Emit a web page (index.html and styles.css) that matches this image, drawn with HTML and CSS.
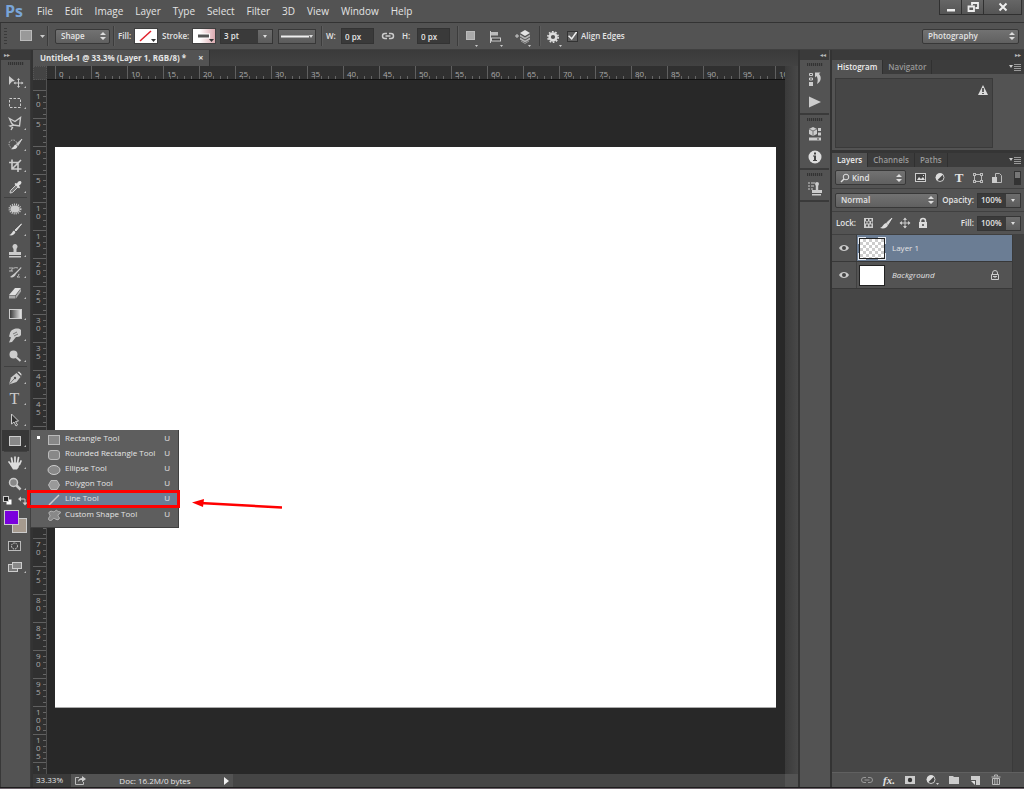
FILE: index.html
```html
<!DOCTYPE html>
<html lang="en">
<head>
<meta charset="utf-8">
<title>Untitled-1 @ 33.3% (Layer 1, RGB/8)</title>
<link rel="stylesheet" href="styles.css">
</head>
<body>
<div class="app">
  <header class="menubar">
    <span class="logo">Ps</span>
    <nav class="menus">
      <button>File</button><button>Edit</button><button>Image</button><button>Layer</button><button>Type</button><button>Select</button><button>Filter</button><button>3D</button><button>View</button><button>Window</button><button>Help</button>
    </nav>
    <div class="window-buttons">
      <button aria-label="Minimize"><svg width="16" height="12"><path d="M4 8h8v2.500h-8z" fill="#eee"/></svg></button>
      <button aria-label="Restore"><svg width="16" height="12"><g fill="none" stroke="#eee" stroke-width="1.800"><path d="M7 4.500V2h6v5h-2.500"/><path d="M3.500 5.500h5.500v4.500h-5.500z"/></g></svg></button>
      <button class="close" aria-label="Close"><svg width="16" height="12"><path d="M4.500 2.500l7 7M11.500 2.500l-7 7" stroke="#eee" stroke-width="2"/></svg></button>
    </div>
  </header>

  <div class="options">
    <span class="grip-v"></span>
    <button class="preset" aria-label="Tool preset"><svg width="28" height="14"><rect x="1.500" y="1.500" width="11" height="10" fill="#999" stroke="#bbb"/><path d="M21 6h5l-2.500 3z" fill="#ccc"/></svg></button>
    <span class="divider"></span>
    <select class="select mode" aria-label="Mode"><option>Shape</option></select>
    <span class="divider"></span>
    <span class="label fill-label">Fill:</span>
    <button class="swatch" aria-label="Fill"><svg width="22" height="14"><rect width="22" height="14" fill="#fff"/><path d="M5 12L16 2" stroke="#e0202a" stroke-width="1.500"/><path d="M16 10h5l-2.500 3z" fill="#333"/></svg></button>
    <span class="label stroke-label">Stroke:</span>
    <button class="swatch" aria-label="Stroke"><svg width="22" height="14"><defs><linearGradient id="pink"><stop offset="0.300" stop-color="#fff"/><stop offset="1" stop-color="#dcaab0"/></linearGradient></defs><rect width="22" height="14" fill="url(#pink)"/><rect x="4.500" y="5" width="12" height="4" fill="#555" stroke="#fff"/><path d="M16 10h5l-2.500 3z" fill="#333"/></svg></button>
    <span class="combo stroke-width"><input value="3 pt" aria-label="Stroke width"><button aria-label="Stroke width list"></button></span>
    <button class="line-type" aria-label="Stroke type"><svg width="36" height="13"><path d="M2 6.500h28" stroke="#eee" stroke-width="2"/><path d="M30 5h4l-2 3z" fill="#ddd"/></svg></button>
    <span class="divider"></span>
    <label class="label" for="w">W:</label><input id="w" class="field w-field" value="0 px">
    <button class="link" aria-label="Link width and height"><svg width="14" height="10"><path d="M6 2.500H4a2.500 2.500 0 000 5h2M8 2.500h2a2.500 2.500 0 010 5H8M4.500 5h5" fill="none" stroke="#ccc" stroke-width="1.500"/></svg></button>
    <label class="label" for="h">H:</label><input id="h" class="field" value="0 px">
    <span class="divider after-size"></span>
    <button class="op first" aria-label="Path operations"><svg width="16" height="18"><rect x="2.500" y="1.500" width="8" height="8" fill="#aaa" stroke="#bbb"/><path d="M11 15h3l-1.500 2z" fill="#ccc"/></svg></button>
    <button class="op second" aria-label="Path alignment"><svg width="16" height="18"><path d="M1.500 1v12" stroke="#ccc"/><rect x="2" y="2" width="7" height="3.500" fill="#bbb"/><rect x="2.500" y="8" width="9" height="3" fill="#444" stroke="#ccc"/><path d="M11 15h3l-1.500 2z" fill="#ccc"/></svg></button>
    <button class="op third" aria-label="Path arrangement"><svg width="18" height="18"><path d="M0 6h4M2 4v4" stroke="#ccc"/><path d="M5 3l5-3 5 3-5 3z" fill="#e4e4e4"/><path d="M5 4.500l5 3 5-3v2l-5 3-5-3zM5 7.500l5 3 5-3v2l-5 3-5-3z" fill="#b4b4b4"/><path d="M6 11l4 2.500 4-2.500" stroke="#999" fill="none"/><path d="M13 15h3l-1.500 2z" fill="#ccc"/></svg></button>
    <span class="divider"></span>
    <button class="gear" aria-label="Settings"><svg width="16" height="18"><circle cx="7" cy="7" r="3.400" fill="none" stroke="#ddd" stroke-width="2.600"/><circle cx="7" cy="7" r="5.200" fill="none" stroke="#ddd" stroke-width="1.600" stroke-dasharray="1.700 1.560"/><path d="M13 15h3l-1.500 2z" fill="#ccc"/></svg></button>
    <label class="check"><input type="checkbox" checked>Align Edges</label>
    <select class="select workspace" aria-label="Workspace"><option>Photography</option></select>
  </div>

  <main class="main">
    <aside class="tools">
      <div class="dock-head left">▸▸</div>
      <div class="grip"></div>
      <div class="tool-list">
        <button class="tool" aria-label="Move"><svg viewBox="0 0 18 18"><path d="M3 3l6 5-3 .500L3 12z" fill="#ccc"/><path d="M12.500 6v8M8.500 10h8" stroke="#ccc"/><path d="M11 7l1.500-2L14 7zM11 13l1.500 2 1.500-2zM9.500 8.500l-2 1.500 2 1.500zM15.500 8.500l2 1.500-2 1.500z" fill="#ccc"/></svg></button>
        <button class="tool" aria-label="Rectangular marquee"><svg viewBox="0 0 18 18"><rect x="3.500" y="4.500" width="11" height="9" fill="none" stroke="#ccc" stroke-dasharray="2.500 1.500"/></svg></button>
        <button class="tool" aria-label="Lasso"><svg viewBox="0 0 18 18"><path d="M3.500 3.500l5.500 3 5.500-4-1 8.500-6-1-2-2zM7.500 10l-3.500 1 2.500 1.500-1.500 2.500" fill="none" stroke="#ccc" stroke-width="1.400"/></svg></button>
        <button class="tool" aria-label="Quick selection"><svg viewBox="0 0 18 18"><circle cx="7" cy="8" r="4" fill="none" stroke="#bbb" stroke-dasharray="1.500 1.200"/><path d="M16 3l-5.500 5L12 9.500z" fill="#ccc" stroke="#ccc"/><path d="M9.500 8.500l2 2c-1 3-4 3-7 2.500 3-.500 3-3.500 5-4.500z" fill="#ddd"/></svg></button>
        <button class="tool" aria-label="Crop"><svg viewBox="0 0 18 18"><path d="M6 2.500v9.500h9.500M3 5.500h9V15M6 12l9-9" fill="none" stroke="#ccc" stroke-width="1.600"/></svg></button>
        <button class="tool" aria-label="Eyedropper"><svg viewBox="0 0 18 18"><path d="M10 7l-5.500 5.500-.500 2.500 2.500-.500L12 9" fill="#777" stroke="#ccc"/><path d="M8.500 6l4.500 4.500 1-1-1-2c2.500-1.500 3-3 2-4s-2.500-.500-4 2l-1.500-.500z" fill="#ddd"/></svg></button>
        <hr>
        <button class="tool" aria-label="Healing brush"><svg viewBox="0 0 18 18"><ellipse cx="9" cy="9" rx="4.500" ry="3.500" fill="#ccc"/><ellipse cx="9" cy="9" rx="5.500" ry="4.500" fill="none" stroke="#ccc" stroke-width="2" stroke-dasharray="1 1"/></svg></button>
        <button class="tool" aria-label="Brush"><svg viewBox="0 0 18 18"><path d="M15.500 3L9 9l1 1z" fill="#ddd" stroke="#ddd"/><path d="M8 9.500l1.500 1.500c-1 3-4 4-6.500 3 3-.500 3-3.500 5-4.500z" fill="#ddd"/></svg></button>
        <button class="tool" aria-label="Clone stamp"><svg viewBox="0 0 18 18"><path d="M9 2a2.500 2.500 0 012.300 3.500L10.500 7v3H15v3H3v-3h4.500V7l-.800-1.500A2.500 2.500 0 019 2zM3 14h12v1.500H3z" fill="#ccc"/></svg></button>
        <button class="tool" aria-label="History brush"><svg viewBox="0 0 18 18"><path d="M15 4l-5 5-1 1-5 4c2 1 5 0 6-3l5.500-6z" fill="#ccc"/><path d="M5 8a5 4 0 017-3M3 5h4M3 8h4M13 11a5 4 0 01-2 3h3" fill="none" stroke="#bbb"/></svg></button>
        <button class="tool" aria-label="Eraser"><svg viewBox="0 0 18 18"><path d="M3 11l6-7h6l-5.500 7z" fill="#e0e0e0"/><path d="M3 11.500h6.500v3H3zM10 11.500l5-7v3l-5 7z" fill="#aaa"/></svg></button>
        <button class="tool" aria-label="Gradient"><svg viewBox="0 0 18 18"><defs><linearGradient id="grad"><stop offset="0" stop-color="#333"/><stop offset="1" stop-color="#eee"/></linearGradient></defs><rect x="3.500" y="4.500" width="12" height="9" fill="url(#grad)" stroke="#ccc"/></svg></button>
        <button class="tool" aria-label="Smudge"><svg viewBox="0 0 18 18"><path d="M4 7c1-4 8-6 11-3v5c-1 2-4 2-5 2l-4 5-3 .500 2-5-2-1z" fill="#ccc"/><path d="M7 8l4-2M8 10l4-2" stroke="#777"/></svg></button>
        <button class="tool" aria-label="Dodge"><svg viewBox="0 0 18 18"><circle cx="7.500" cy="7.500" r="4" fill="#ccc"/><path d="M10 10l4.500 4" stroke="#ccc" stroke-width="2"/></svg></button>
        <hr>
        <button class="tool" aria-label="Pen"><svg viewBox="0 0 18 18"><path d="M3 15.500l2-7L10.500 4l4 4-4 5z" fill="#ccc"/><path d="M11 3l4.500 4.500L16 5l-3-3zM3 15.500l5-5.500" fill="#ccc" stroke="#555" stroke-width=".8"/><circle cx="9" cy="9" r="1.200" fill="#555"/></svg></button>
        <button class="tool type-tool" aria-label="Type">T</button>
        <button class="tool" aria-label="Path selection"><svg viewBox="0 0 18 18"><path d="M5.500 3v10l2.500-2 2 4 1.500-1-2-3.500 3-.500z" fill="#333" stroke="#ccc"/></svg></button>
        <button class="tool active" aria-label="Shape"><svg viewBox="0 0 18 18"><rect x="3.500" y="4.500" width="11" height="9" fill="#888" stroke="#ccc"/></svg></button>
        <hr>
        <button class="tool" aria-label="Hand"><svg viewBox="0 0 18 18"><path d="M5 10.500L3 8M6.500 9L5.500 4M9 8.500V3M11.500 9l1-5.500M13.500 10.500l1.500-3.500" stroke="#ddd" stroke-width="1.700" stroke-linecap="round"/><path d="M5 8.500h9l-1.500 5L11 15.500H7l-3-5z" fill="#ddd"/></svg></button>
        <button class="tool" aria-label="Zoom"><svg viewBox="0 0 18 18"><circle cx="7.500" cy="7.500" r="4" fill="#888" stroke="#ccc" stroke-width="1.500"/><path d="M10.500 10.500l4 4" stroke="#ccc" stroke-width="2.500"/></svg></button>
      </div>
      <div class="mini">
        <button aria-label="Default colors"><svg width="10" height="10"><rect x="3.500" y="3.500" width="5" height="5" fill="#fff"/><rect x=".5" y=".5" width="5" height="5" fill="#222" stroke="#ccc"/></svg></button>
        <button aria-label="Swap colors"><svg width="10" height="10"><path d="M2 3h5v4" fill="none" stroke="#ccc"/><path d="M3 .5v5L0 3zM4.500 6.500h5L7 9.500z" fill="#ccc"/></svg></button>
      </div>
      <div class="colors"><button class="bg" aria-label="Background color"></button><button class="fg" aria-label="Foreground color"></button></div>
      <button class="tool plain" aria-label="Quick mask"><svg viewBox="0 0 18 18"><rect x="2.500" y="4.500" width="12" height="9" fill="#444" stroke="#bbb"/><circle cx="8.500" cy="9" r="3" fill="none" stroke="#ddd" stroke-dasharray="1.500 1"/></svg></button>
      <button class="tool" aria-label="Screen mode"><svg viewBox="0 0 18 18"><rect x="2.500" y="6.500" width="9" height="7" fill="#777" stroke="#ccc"/><rect x="6.500" y="4.500" width="9" height="6" fill="#888" stroke="#ccc"/></svg></button>
    </aside>

    <section class="document">
      <div class="tabbar"><div class="doc-tab"><span>Untitled-1 @ 33.3% (Layer 1, RGB/8) *</span><button aria-label="Close document">×</button></div></div>
      <div class="workspace-grid">
        <div class="corner"></div>
        <div class="ruler-h"><span>0</span><span>5</span><span>10</span><span>15</span><span>20</span><span>25</span><span>30</span><span>35</span><span>40</span><span>45</span><span>50</span><span>55</span><span>60</span><span>65</span><span>70</span><span>75</span><span>80</span><span>85</span><span>90</span><span>95</span><span>10</span></div>
        <div class="scroll-v"></div>
        <div class="ruler-v"><span>1<br>0</span><span>5</span><span>0</span><span>5</span><span>1<br>0</span><span>1<br>5</span><span>2<br>0</span><span>2<br>5</span><span>3<br>0</span><span>3<br>5</span><span>4<br>0</span><span>4<br>5</span><span>5<br>0</span><span>5<br>5</span><span>6<br>0</span><span>6<br>5</span><span>7<br>0</span><span>7<br>5</span><span>8<br>0</span><span>8<br>5</span><span>9<br>0</span><span>9<br>5</span><span>1<br>0<br>0</span><span>1<br>0<br>5</span><span>1</span></div>
        <div class="pasteboard"><div class="paper"></div></div>
      </div>
      <footer class="status">
        <span class="zoom">33.33%</span>
        <div class="info"><svg width="12" height="10"><path d="M5 1.500H1.500v7h8V6" fill="none" stroke="#bbb"/><path d="M4 6c0-3 2-4 4-4V0l4 3-4 3V4C6 4 5 4.500 4 6z" fill="#ccc"/></svg><span>Doc: 16.2M/0 bytes</span><button aria-label="Status options"><svg width="6" height="8"><path d="M0 0l5 4-5 4z" fill="#eee"/></svg></button></div>
        <div class="scroll-corner"></div>
      </footer>
    </section>

    <aside class="icon-dock">
      <div class="dock-head">◂◂</div>
      <div class="dock-group"><div class="grip"></div>
        <button aria-label="History"><svg viewBox="0 0 18 18"><path d="M3.500 3.500h3v2h-3zM3.500 8h3v2h-3z" fill="none" stroke="#ccc"/><path d="M3 12h4v4H3z" fill="#ccc"/><path d="M9 2.500h5.500L13 4c3 3 2 8-2 10 1-3 1-6-.500-8L9 7.500z" fill="#ccc"/></svg></button>
        <button aria-label="Actions"><svg viewBox="0 0 18 18"><path d="M3 3.500l12 5.500-12 5.500z" fill="#ccc"/></svg></button>
      </div>
      <div class="dock-group"><div class="grip"></div>
        <button aria-label="Properties"><svg viewBox="0 0 18 18"><path d="M7 2l4 2v5l-4 2-4-2V4z" fill="#ccc"/><path d="M3 4l4 2 4-2M7 6v5" stroke="#777" fill="none"/><path d="M12 3h3v3h-3zM12 7.500h3v3h-3zM3 12.500h12v3H3z" fill="#ccc"/><path d="M11 14h2" stroke="#444"/></svg></button>
        <button aria-label="Info"><svg viewBox="0 0 18 18"><circle cx="9" cy="9" r="6.500" fill="#ddd"/><path d="M8 4.500h2v2H8zM7 7.500h3V12h1v1H7v-1h1V8.500H7z" fill="#444"/></svg></button>
      </div>
      <div class="dock-group"><div class="grip"></div>
        <button aria-label="Clone source"><svg viewBox="0 0 18 18"><path d="M2 3h2M2 6h2M2 9h2M5 3h4M5 6h3M5 9h2" stroke="#ccc"/><path d="M9 4a2 2 0 114 0l-.800 2v4H16v3H6v-3h3.800V6zM6 14h9v1.500H6z" fill="#ccc"/></svg></button>
      </div>
    </aside>

    <aside class="panels">
      <div class="dock-head right">▸▸</div>
      <div class="tabs"><button class="on">Histogram</button><button>Navigator</button><svg class="panel-menu" width="12" height="8"><path d="M0 2h4L2 5z" fill="#ccc"/><path d="M5 1.500h7M5 3.500h7M5 5.500h7M5 7.500h7" stroke="#999"/></svg></div>
      <div class="histogram"><div class="graph"><svg width="10" height="10"><path d="M5 0l5 10H0z" fill="#ddd"/><path d="M5 3v4M5 8v1" stroke="#333" stroke-width="1.500"/></svg></div></div>
      <div class="tabs second"><button class="on">Layers</button><button>Channels</button><button>Paths</button><svg class="panel-menu" width="12" height="8"><path d="M0 2h4L2 5z" fill="#ccc"/><path d="M5 1.500h7M5 3.500h7M5 5.500h7M5 7.500h7" stroke="#999"/></svg></div>
      <div class="row filters">
        <div class="kind"><svg width="10" height="10"><circle cx="6" cy="4" r="2.800" fill="none" stroke="#ddd"/><path d="M4 6L1 9" stroke="#ddd" stroke-width="1.500"/></svg><select class="select" aria-label="Filter type"><option>Kind</option></select></div>
        <div class="filter-icons">
          <button aria-label="Pixel layers"><svg width="12" height="12"><rect x=".5" y="1.500" width="10" height="8" fill="#444" stroke="#ccc"/><path d="M2 8l2-3 2 2 2-2 2 3zM8 3h1v1H8z" fill="#ddd"/></svg></button>
          <button aria-label="Adjustment layers"><svg width="12" height="12"><circle cx="6" cy="5.500" r="4" fill="#444" stroke="#ccc"/><path d="M3 8.500a4 4 0 016-6z" fill="#ddd"/></svg></button>
          <button class="serif" aria-label="Type layers">T</button>
          <button aria-label="Shape layers"><svg width="12" height="12"><path d="M2.500 2.500h7v7h-7z" fill="none" stroke="#bbb"/><path d="M1 1h3v3H1zM8 1h3v3H8zM1 8h3v3H1zM8 8h3v3H8z" fill="#bbb"/><path d="M2 2h1v1H2zM9 2h1v1H9zM2 9h1v1H2zM9 9h1v1H9z" fill="#555"/></svg></button>
          <button aria-label="Smart objects"><svg width="12" height="12"><path d="M4.500 1.500h4l2 2v7h-6z" fill="#555" stroke="#bbb"/><path d="M1 5h5v6H1z" fill="#ccc"/></svg></button>
        </div>
        <button class="toggle" aria-label="Toggle filtering"></button>
      </div>
      <div class="row blend">
        <select class="select blend-mode" aria-label="Blend mode"><option>Normal</option></select>
        <label class="label" for="op">Opacity:</label><span class="combo"><input id="op" value="100%"><button aria-label="Opacity slider"></button></span>
      </div>
      <div class="row lock">
        <span class="label">Lock:</span>
        <button aria-label="Lock transparency"><svg width="12" height="12"><rect x="2" y="1" width="9" height="10" fill="#ccc"/><path d="M4 2h2v2H4zM7.500 2h2v2h-2zM3 4.500h1.500v2H3zM5.500 4.500h2v2h-2zM9 4.500h1.500v2H9zM4 7.500h2v2H4zM7.500 7.500h2v2h-2z" fill="#555"/></svg></button>
        <button aria-label="Lock pixels"><svg width="13" height="12"><path d="M12 1L6.500 6 8 7.500z" fill="#ddd" stroke="#ddd"/><path d="M6 6l2 2c-1 3-4 4-8 3 3-1 3-4 6-5z" fill="#ddd"/></svg></button>
        <button aria-label="Lock position"><svg width="12" height="12"><path d="M6 1v10M1 6h10" stroke="#ccc"/><path d="M4 3l2-2.500L8 3zM4 9l2 2.500L8 9zM3 4L.5 6 3 8zM9 4l2.500 2L9 8z" fill="#ccc"/></svg></button>
        <button aria-label="Lock all"><svg width="12" height="12"><path d="M3.500 6V4a2.500 2.500 0 015 0v2" fill="none" stroke="#ddd" stroke-width="1.500"/><path d="M2 5h8v6H2z" fill="#ddd"/><path d="M6 7v2" stroke="#444" stroke-width="1.500"/></svg></button>
        <label class="label fill-right" for="fi">Fill:</label><span class="combo"><input id="fi" value="100%"><button aria-label="Fill slider"></button></span>
      </div>
      <div class="layers">
        <ul>
          <li class="selected"><button class="eye" aria-label="Toggle Layer 1"><svg width="10" height="8"><path d="M0 4c2-4 8-4 10 0-2 4-8 4-10 0z" fill="#ccc"/><circle cx="5" cy="4" r="2" fill="#444"/></svg></button><span class="thumb checker"></span><span class="name">Layer 1</span></li>
          <li><button class="eye" aria-label="Toggle Background"><svg width="10" height="8"><path d="M0 4c2-4 8-4 10 0-2 4-8 4-10 0z" fill="#ccc"/><circle cx="5" cy="4" r="2" fill="#444"/></svg></button><span class="thumb"></span><em class="name">Background</em><svg class="locked" width="10" height="10"><path d="M2.500 5V3a2.500 2.500 0 015 0v2M1.500 4.500h7v5h-7zM3 6.500h4M5 6v2" fill="none" stroke="#ccc"/></svg></li>
        </ul>
        <div class="layer-scroll"></div>
      </div>
      <footer class="layer-actions">
        <button aria-label="Link layers"><svg width="14" height="12"><path d="M6 3.500H4a2.500 2.500 0 000 5h2M8 3.500h2a2.500 2.500 0 010 5H8M4.500 6h5" fill="none" stroke="#999"/></svg></button>
        <button class="fx" aria-label="Layer style">fx.</button>
        <button aria-label="Add mask"><svg width="12" height="12"><path d="M1 2h10v8H1z" fill="#ccc"/><circle cx="6" cy="6" r="2.200" fill="#333"/></svg></button>
        <button aria-label="Adjustment layer"><svg width="14" height="12"><circle cx="6" cy="5.500" r="4" fill="#444" stroke="#ccc"/><path d="M3 8.500a4 4 0 016-6z" fill="#ddd"/><path d="M11 9h3l-1.500 2z" fill="#ccc"/></svg></button>
        <button aria-label="New group"><svg width="12" height="12"><path d="M1 2h4l1 1h5v7H1z" fill="#ccc"/></svg></button>
        <button aria-label="New layer"><svg width="12" height="12"><path d="M2 2h9v9H7V6H2z" fill="#ccc"/><path d="M2 7h4v4z" fill="#ddd"/></svg></button>
        <button aria-label="Delete layer"><svg width="12" height="12"><path d="M4.500 2.500V1h3v1.500M1.500 3h9" fill="none" stroke="#bbb"/><path d="M2.500 4.500h7v6h-7zM4.800 5v5M7.200 5v5" fill="none" stroke="#bbb"/></svg></button>
      </footer>
    </aside>
  </main>
  <div class="bottom-edge"></div>

  <div class="flyout" role="menu">
    <button role="menuitem"><i class="dot"></i><svg width="14" height="12"><rect x="1.500" y="2.500" width="11" height="9" fill="#888" stroke="#bbb"/></svg><span>Rectangle Tool</span><kbd>U</kbd></button>
    <button role="menuitem"><i></i><svg width="14" height="12"><rect x="1.500" y="2.500" width="11" height="9" rx="2.500" fill="#888" stroke="#bbb"/></svg><span>Rounded Rectangle Tool</span><kbd>U</kbd></button>
    <button role="menuitem"><i></i><svg width="14" height="12"><ellipse cx="7" cy="7" rx="6" ry="4.500" fill="#888" stroke="#ccc"/></svg><span>Ellipse Tool</span><kbd>U</kbd></button>
    <button role="menuitem"><i></i><svg width="14" height="12"><path d="M4 2.500h6L12.500 7 10 11.500H4L1.500 7z" fill="#999" stroke="#bbb"/></svg><span>Polygon Tool</span><kbd>U</kbd></button>
    <button role="menuitem" class="highlight"><i></i><svg width="14" height="12"><path d="M2 12L12 2" stroke="#ccc" stroke-width="1.500"/></svg><span>Line Tool</span><kbd>U</kbd></button>
    <button role="menuitem"><i></i><svg width="14" height="12"><path d="M3 2.500c2-1 3 1 4.500 0S9 .5 10.500 2s3 0 3 1.500S10.500 5 11 6.500s2 2 1 3.500-3 .500-4.500-.500-2 2-4 2-2.500-1.500-1.500-3S3.500 7 2.500 5.500 2 3 3 2.500z" fill="#888" stroke="#bbb"/></svg><span>Custom Shape Tool</span><kbd>U</kbd></button>
  </div>
  <div class="callout"></div>
  <svg class="arrow" width="92" height="14"><path d="M8 5l82 4.500" stroke="#f00" stroke-width="2.500"/><path d="M0 4.500L12 1l-1 8z" fill="#f00"/></svg>
</div>
</body>
</html>
```
FILE: styles.css
```css
* { box-sizing: border-box; }
body { margin: 0; background: #535353; color: #e4e4e4; font: 8px/12px "Open Sans", "Noto Sans", sans-serif; }
button, input, select { font: inherit; color: inherit; margin: 0; padding: 0; border: 0; background: none; border-radius: 0; }
button { display: flex; align-items: center; justify-content: center; flex: none; }
svg { display: block; flex: none; }
.app { position: relative; display: flex; flex-direction: column; height: 100vh; overflow: hidden; }

.menubar { display: flex; flex: none; height: 23px; border-bottom: 1px solid #333; background: #535353; }
.logo { width: 32px; padding-left: 5px; color: #79a5d8; font: bold 16px/22px "Open Sans", sans-serif; }
.menus { display: flex; gap: 12px; padding-left: 5px; font-size: 10px; }
.window-buttons { display: flex; margin: 0 2px 0 auto; height: 15px; border: 1px solid #303030; border-top: 0; background: linear-gradient(#666, #555); }
.window-buttons button { width: 22px; border-right: 1px solid #303030; }
.window-buttons .close { width: 37px; border: 0; }

.options { display: flex; flex: none; align-items: center; height: 27px; border-bottom: 1px solid #404040; border-left: 1px solid #383838; font-weight: 600; }
.grip-v { width: 3px; height: 17px; margin-left: 3px; background: repeating-linear-gradient(#3a3a3a 0 1px, #535353 1px 3px); }
.preset { width: 28px; margin: 0 0 0 12px; }
.divider { flex: none; width: 2px; height: 20px; border-left: 1px solid #3c3c3c; border-right: 1px solid #5c5c5c; }
.select { appearance: none; height: 15px; padding: 0 14px 0 5px; border: 1px solid #383838; border-radius: 2px; background: url("data:image/svg+xml,%3Csvg xmlns='http://www.w3.org/2000/svg' width='6' height='8'%3E%3Cpath d='M0 3l3-3 3 3zM0 5l3 3 3-3z' fill='%23ddd'/%3E%3C/svg%3E") no-repeat right 3px center, linear-gradient(#727272, #606060); font-weight: 600; }
.mode { width: 55px; margin: 0 3px 0 6px; }
.label { flex: none; font-weight: 600; }
.fill-label { width: 17px; margin-left: 3px; }
.stroke-label { width: 29px; margin: 0 2px 0 5px; }
.swatch { width: 22px; height: 14px; outline: 1px solid #404040; }
.combo { display: flex; flex: none; height: 15px; border: 1px solid #353535; font-weight: 600; }
.combo input { width: 24px; padding-left: 3px; background: #3a3a3a; }
.combo button { width: 14px; background: linear-gradient(#6c6c6c, #5c5c5c); }
.combo button::after { content: ""; border: 2px solid transparent; border-top: 3px solid #ddd; border-bottom: 0; }
.stroke-width { margin: 0 5px; }
.stroke-width input { width: 37px; }
.line-type { width: 38px; height: 15px; margin-right: 5px; border: 1px solid #383838; background: linear-gradient(#6c6c6c, #5c5c5c); }
.options label.label { width: 15px; margin-left: 3px; }
.field { flex: none; width: 33px; height: 16px; padding-left: 3px; border: 1px solid #333; background: #3a3a3a; }
.w-field { margin-right: 7px; }
.link { width: 14px; margin-right: 4px; }
.after-size { margin-left: 7px; }
.op.first { margin: 5px 0 0 5px; }
.op.second { margin: 5px 0 0 9px; }
.op.third { margin: 5px 6px 0 10px; }
.gear { margin: 5px 5px 0 5px; }
.check { display: flex; align-items: center; gap: 3px; }
.check input { appearance: none; width: 11px; height: 11px; border: 1px solid #333; background: url("data:image/svg+xml,%3Csvg xmlns='http://www.w3.org/2000/svg' width='10' height='10'%3E%3Cpath d='M1 4l3 3 5-7' fill='none' stroke='%23eee' stroke-width='1.500'/%3E%3C/svg%3E") no-repeat center, #606060; }
.workspace { width: 97px; margin: 0 5px 0 auto; }

.main { display: flex; flex: 1; min-height: 0; background: #333; }
.dock-head { flex: none; height: 10px; padding: 0 3px; background: #3a3a3a; color: #bbb; font: 6px/10px "DejaVu Sans", sans-serif; text-align: right; }
.dock-head.left { text-align: left; }
.grip { flex: none; width: 16px; height: 3px; margin: 2px auto 0; background: repeating-linear-gradient(90deg, #333 0 1px, #4c4c4c 1px 2px); }

.tools { flex: none; width: 31px; border: solid #383838; border-width: 0 1px; background: #535353; }
.tool-list { padding-top: 6px; }
.tool { position: relative; width: 27px; height: 21px; margin-left: 1px; }
.tool svg { width: 18px; height: 18px; margin-right: 2px; }
.tool::after { content: ""; position: absolute; right: 3px; bottom: 4px; border: 1px solid; border-color: transparent #bbb #bbb transparent; }
.tool.plain::after { display: none; }
.tool.active { background: #383838; }
.type-tool { padding-right: 2px; color: #ccc; font: 16px/20px "Liberation Serif", serif; }
.tool-list hr { height: 1px; margin: 0 3px; border: 0; background: #404040; }
.mini { display: flex; align-items: flex-start; gap: 5px; height: 15px; padding: 2px 0 0 2px; }
.colors { display: grid; width: 23px; height: 23px; margin: 1px 0 2px 3px; }
.colors button { grid-area: 1 / 1; width: 15px; height: 15px; border: 1px solid #ccc; }
.fg { background: #7a00dd; }
.bg { place-self: end; background: #a69a8e; }

.document { display: flex; flex: 1; min-width: 0; flex-direction: column; margin: 0 1px 0 2px; }
.tabbar { display: flex; flex: none; height: 16px; background: linear-gradient(#3a3a3a, #424242); }
.doc-tab { display: flex; align-items: center; gap: 12px; padding: 0 6px 0 7px; border-right: 1px solid #333; background: #535353; font-weight: 700; }
.doc-tab button { font-size: 9px; }
.workspace-grid { display: grid; flex: 1; min-height: 0; grid-template: 14px minmax(0, 1fr) / 14px minmax(0, 1fr) 13px; }
.corner { background: #444; border: 1px dotted #555; }
.ruler-h { display: flex; overflow: hidden; padding-left: 8px; border-bottom: 1px solid #111; background: #303030; color: #aaa; }
.ruler-h span { flex: none; width: 36px; padding-left: 3px; border-left: 1px solid #606060; line-height: 15px; background: repeating-linear-gradient(90deg, transparent 0 6px, #666 6px 7px) no-repeat 0 100% / 34px 3px; }
.ruler-v { overflow: hidden; padding-top: 10px; border-right: 1px solid #505050; background: #303030; color: #aaa; }
.ruler-v span { display: block; height: 28px; padding: 1px 0 0 3px; border-top: 1px solid #606060; line-height: 8px; background: repeating-linear-gradient(transparent 0 5px, #666 5px 6px) no-repeat 100% 0 / 3px 27px; }
.scroll-v { grid-area: 1 / 3 / 3 / 4; background: linear-gradient(90deg, #3a3a3a, #484848); }
.pasteboard { padding: 67px 9px 66px 8px; background: #282828; }
.paper { height: 100%; background: #fff; border-bottom: 1px solid #aaa; }
.status { display: flex; flex: none; height: 13px; background: #454545; }
.zoom { width: 38px; padding-left: 3px; background: #3a3a3a; }
.info { display: flex; align-items: center; justify-content: space-between; width: 162px; padding: 0 3px; background: #535353; }
.scroll-corner { width: 13px; margin-left: auto; background: #535353; }

.icon-dock { flex: none; width: 31px; padding-right: 1px; margin-right: 2px; border-left: 1px solid #333; background: #535353; }
.dock-group { border-bottom: 2px solid #3a3a3a; }
.dock-group button { width: 29px; height: 23px; }
.dock-group svg { width: 18px; height: 18px; }
.dock-group .grip { margin: 3px auto 1px; }

.panels { display: flex; flex: none; width: 192px; flex-direction: column; background: #535353; }
.tabs { display: flex; flex: none; height: 14px; background: #3c3c3c; color: #999; font-weight: 600; }
.tabs button { padding: 0 5px; border-right: 1px solid #303030; }
.tabs .on { background: #535353; color: #eee; }
.panel-menu { margin: 3px 3px 0 auto; }
.histogram { flex: none; height: 79px; padding: 4px 31px 4px 3px; border-bottom: 3px solid #353535; }
.graph { display: flex; justify-content: flex-end; height: 70px; padding: 6px 4px; border: 1px solid #3a3a3a; background: #464646; }
.row { display: flex; flex: none; align-items: center; height: 22px; padding: 0 3px; border-bottom: 1px solid #404040; }
.kind { display: grid; width: 71px; align-items: center; }
.kind svg { grid-area: 1 / 1; z-index: 1; margin-left: 5px; }
.kind .select { grid-area: 1 / 1; width: 71px; padding-left: 16px; }
.filter-icons { display: flex; flex: 1; justify-content: space-between; padding: 0 11px 0 9px; }
.serif { width: 12px; font: bold 13px/12px "Liberation Serif", serif; }
.toggle { width: 7px; height: 14px; border: 1px solid #333; background: linear-gradient(#777 50%, #333 50%); }
.blend, .lock { height: 23px; }
.blend-mode { width: 103px; }
.blend .label { margin: 0 3px 0 auto; }
.lock .label { margin: 0 6px 0 1px; }
.lock > button { margin-right: 6px; }
.lock .fill-right { margin: 0 3px 0 auto; }
.row .combo { width: 44px; }
.row .combo input { width: 28px; }
.layers { display: flex; flex: 1; min-height: 0; background: #464646; }
.layers ul { flex: 1; margin: 0; padding: 0; list-style: none; }
.layers li { display: flex; align-items: center; height: 27px; border-bottom: 1px solid #383838; background: #535353; }
.layers .selected { background: linear-gradient(90deg, #535353 25px, #6b7d94 25px); }
.eye { width: 25px; height: 26px; border-right: 1px solid #404040; }
.thumb { position: relative; width: 26px; height: 21px; margin-left: 2px; border: 1px solid #222; background: #fff; }
.checker { background: repeating-conic-gradient(#ccc 0 25%, #fff 0 50%) 0 0 / 6px 6px; }
.checker::before {
  --h: linear-gradient(90deg, #e6ecf4 8px, transparent 8px 20px, #e6ecf4 20px);
  --v: linear-gradient(#e6ecf4 7px, transparent 7px 16px, #e6ecf4 16px);
  content: ""; position: absolute; inset: -2px;
  background: var(--h) 0 0 / 100% 1px no-repeat, var(--h) 0 100% / 100% 1px no-repeat, var(--v) 0 0 / 1px 100% no-repeat, var(--v) 100% 0 / 1px 100% no-repeat;
}
.name { margin-left: 7px; font-weight: 500; }
.locked { margin: 0 12px 0 auto; }
.layer-scroll { width: 12px; border-left: 1px solid #3a3a3a; background: #414141; }
.layer-actions { display: flex; flex: none; align-items: center; justify-content: flex-end; gap: 9px; height: 15px; padding-right: 22px; border-top: 1px solid #606060; }
.fx { font: italic bold 11px/12px "Liberation Serif", serif; }
.bottom-edge { flex: none; height: 2px; border-top: 1px solid #1c1c1c; background: #6a6068; }

.flyout { position: absolute; left: 30px; top: 430px; width: 149px; padding-bottom: 6px; border: 1px solid #404040; border-top: 0; background: #5e5e5e; }
.flyout button { width: 100%; height: 15px; padding: 0 8px 0 6px; justify-content: flex-start; }
.flyout i { width: 3px; height: 3px; margin-right: 7px; }
.flyout .dot { background: #fff; }
.flyout span { margin-left: 4px; }
.flyout kbd { margin-left: auto; font: inherit; }
.flyout svg { margin-top: 2px; }
.flyout .highlight { height: 16px; background: #6b7d94; }
.callout { position: absolute; left: 27px; top: 490px; width: 153px; height: 18px; border: 3px solid #f00; }
.arrow { position: absolute; left: 192px; top: 498px; }
```
